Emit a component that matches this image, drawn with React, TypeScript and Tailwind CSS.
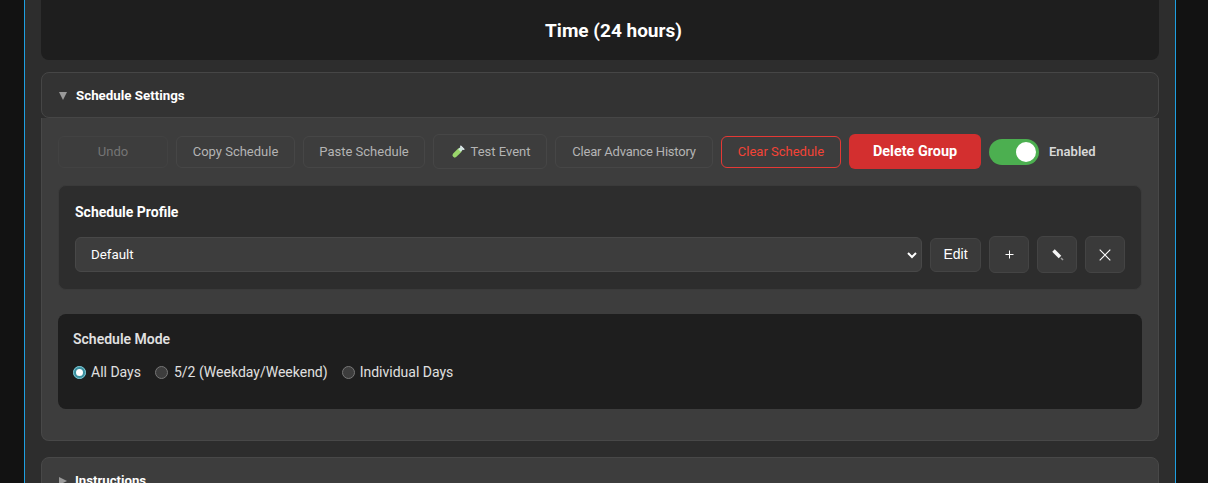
import React from "react";

const flatBtn =
    "h-[32px] rounded-md border text-[13px] flex items-center justify-center shrink-0";
const iconBtn =
    "w-[40px] h-[37px] rounded-md border border-[#444] bg-[#3a3a3a] flex items-center justify-center text-white shrink-0";

function App() {
    return (
        <div className="h-[483px] overflow-hidden bg-[#121212] pl-[24px] pr-[32px] font-['Roboto',sans-serif]">
            <div className="h-full border-x border-x-[#1e9fe0] bg-[#2d2d2d] px-[16px]">
                {/* Chart footer */}
                <div className="h-[60px] rounded-b-lg bg-[#1e1e1e] flex items-center justify-center pl-[27px] pt-[2px] text-[19px] font-bold text-white">
                    Time (24 hours)
                </div>

                {/* Schedule Settings */}
                <div className="mt-[12px] h-[46px] rounded-lg border border-[#464646] bg-[#333] flex items-center pl-[17px] pt-[1px] gap-[9px]">
                    <span className="w-0 h-0 border-x-[4.5px] border-x-transparent border-t-[8px] border-t-[#9a9a9a]" />
                    <span className="text-[13.33px] font-bold text-white">Schedule Settings</span>
                </div>
                <div className="h-[323px] rounded-b-lg border border-t-0 border-[#484848] bg-[#3d3d3d] px-[16px] pt-[16px]">
                    <div className="flex items-center gap-[8px] h-[35px]">
                        <button className={`${flatBtn} w-[110px] border-[#424242] text-[#757575]`}>Undo</button>
                        <button className={`${flatBtn} w-[119px] border-[#464646] text-[#b4b4b4]`}>Copy Schedule</button>
                        <button className={`${flatBtn} w-[122px] border-[#464646] text-[#b4b4b4]`}>Paste Schedule</button>
                        <button className="h-[35px] w-[114px] rounded-md border border-[#464646] text-[13px] text-[#b4b4b4] flex items-center justify-center gap-[5px] pl-[1px] shrink-0">
                            <svg width="15" height="15" viewBox="0 0 15 15" fill="none" strokeLinecap="round">
                                <path d="M3.8 11.2 L8.5 6.5" stroke="#9ad66b" strokeWidth="4.6" />
                                <path d="M8.5 6.5 L11 4" stroke="#cfe6dc" strokeWidth="3.8" strokeLinecap="butt" />
                                <path d="M9.8 2.2 L12.8 5.2" stroke="#e4eef2" strokeWidth="1.5" />
                            </svg>
                            Test Event
                        </button>
                        <button className={`${flatBtn} w-[158px] border-[#464646] text-[#b4b4b4] tracking-[-0.2px]`}>Clear Advance History</button>
                        <button className={`${flatBtn} w-[120px] border-[#e53935] text-[#f44336]`}>Clear Schedule</button>
                        <button className="h-[35px] w-[132px] rounded-md bg-[#d32f2f] text-[14.4px] font-bold text-white shrink-0">
                            Delete Group
                        </button>
                        <div className="h-[26px] w-[50px] rounded-full bg-[#4caf50] flex items-center justify-end pr-[3px] shrink-0">
                            <span className="w-[20px] h-[20px] rounded-full bg-white" />
                        </div>
                        <span className="ml-[2px] text-[13px] font-semibold text-[#d8d8d8]">Enabled</span>
                    </div>

                    {/* Schedule Profile */}
                    <div className="mt-[16px] h-[105px] rounded-lg border border-[#3a3a3a] bg-[#2d2d2d] px-[16px]">
                        <div className="mt-[17px] text-[14px] font-bold text-white leading-[18px]">Schedule Profile</div>
                        <div className="mt-[15px] flex items-center gap-[8px]">
                            <div className="h-[35px] flex-1 rounded-md border border-[#484848] bg-[#3d3d3d] flex items-center justify-between pl-[15px] pr-[3px] text-[13.33px] text-white">
                                Default
                                <svg width="12" height="12" viewBox="0 0 12 12" fill="none" stroke="white" strokeWidth="2">
                                    <path d="M2 4 L6 8 L10 4" />
                                </svg>
                            </div>
                            <button className="h-[34px] w-[51px] rounded-md border border-[#444] bg-[#3a3a3a] text-[14px] text-white font-['Liberation_Sans',sans-serif] shrink-0">
                                Edit
                            </button>
                            <button className={iconBtn}>
                                <svg width="9" height="9" viewBox="0 0 9 9" stroke="white" strokeWidth="1">
                                    <path d="M4.5 0.5 V8.5 M0.5 4.5 H8.5" />
                                </svg>
                            </button>
                            <button className={iconBtn}>
                                <svg width="13" height="13" viewBox="0 0 13 13" fill="none">
                                    <path d="M2.5 2.5 L9 9" stroke="#f4f4f4" strokeWidth="3.6" />
                                    <path d="M10 10 L12 12" stroke="#9a9a9a" strokeWidth="1.6" />
                                </svg>
                            </button>
                            <button className={iconBtn}>
                                <svg width="12" height="12" viewBox="0 0 12 12" stroke="white" strokeWidth="1.1">
                                    <path d="M0.7 0.7 L11.3 11.3 M11.3 0.7 L0.7 11.3" />
                                </svg>
                            </button>
                        </div>
                    </div>

                    {/* Schedule Mode */}
                    <div className="mt-[24px] h-[95px] rounded-lg bg-[#1e1e1e] px-[15px] pt-[16px]">
                        <div className="text-[14px] font-semibold text-[#e0e0e0] leading-[18px]">Schedule Mode</div>
                        <div className="mt-[15px] flex items-center text-[14px] text-[#e0e0e0] leading-[18px]">
                            <span className="w-[13px] h-[13px] rounded-full border-[3px] border-[#3a8f9e] bg-white outline outline-1 outline-[#7fc4d0] -outline-offset-1" />
                            <span className="ml-[5px]">All Days</span>
                            <span className="ml-[14px] w-[13px] h-[13px] rounded-full border border-[#777] bg-[#3d3d3d]" />
                            <span className="ml-[6px]">5/2 (Weekday/Weekend)</span>
                            <span className="ml-[14px] w-[13px] h-[13px] rounded-full border border-[#777] bg-[#3d3d3d]" />
                            <span className="ml-[5px]">Individual Days</span>
                        </div>
                    </div>
                </div>

                {/* Instructions */}
                <div className="mt-[16px] h-[46px] rounded-lg border border-[#484848] bg-[#3d3d3d] flex items-center pl-[17px] pt-[1px] gap-[8px]">
                    <span className="w-0 h-0 border-y-[4.5px] border-y-transparent border-l-[8px] border-l-[#9a9a9a]" />
                    <span className="text-[13.2px] font-bold text-white">Instructions</span>
                </div>
            </div>
        </div>
    );
}

export default App;
